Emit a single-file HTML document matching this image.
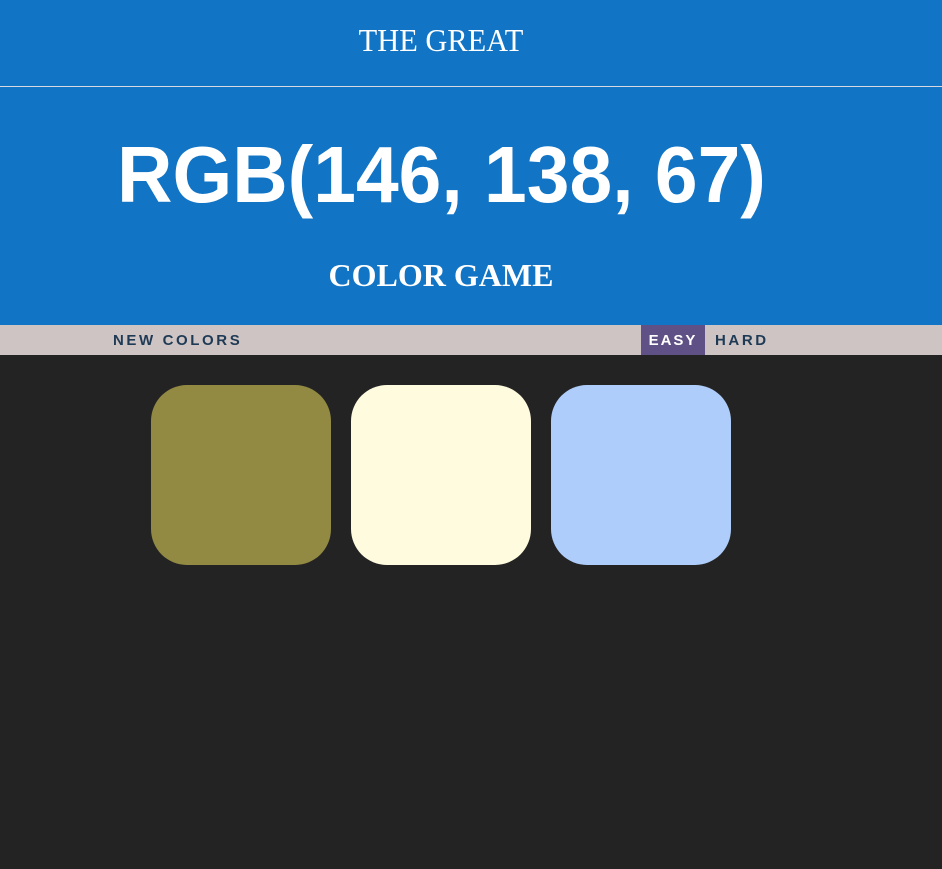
<!DOCTYPE html>
<html><head><style>
html,body{margin:0;padding:0;background:#232323;width:942px;height:869px;overflow:hidden}
#hd{position:absolute;left:0;top:0;width:942px;height:325px;background:#1174c5;color:#fff}
.t1{position:absolute;top:22px;left:0;width:882px;text-align:center;font:32px "Liberation Serif",serif;transform:scaleX(0.95)}
.line{position:absolute;top:86px;left:0;width:942px;height:1px;background:#d8d8e0}
.rgb{position:absolute;top:130px;left:117px;font:bold 80px/90px "Liberation Sans",sans-serif;white-space:nowrap;transform-origin:0 0;transform:scaleX(0.96)}
.t2{position:absolute;top:257px;left:0;width:882px;text-align:center;font:bold 32px "Liberation Serif",serif}
#bar{position:absolute;top:325px;left:0;width:942px;height:30px;background:#cfc4c4;font:bold 15px/30px "Liberation Sans",sans-serif;letter-spacing:2.6px;color:#1e3a55}
#bar span{position:absolute;top:1px;height:30px}
.sq{position:absolute;top:385px;width:180px;height:180px;border-radius:36px}
</style></head><body>
<div id="hd">
<div class="t1">THE GREAT</div>
<div class="line"></div>
<div class="rgb">RGB(146, 138, 67)</div>
<div class="t2">COLOR GAME</div>
</div>
<div id="bar">
<span style="left:113px">NEW COLORS</span>
<span style="left:641px;top:0;line-height:31px;width:64px;background:#5f5185;color:#fff;text-align:center;letter-spacing:2px">EASY</span>
<span style="left:715px">HARD</span>
</div>
<div class="sq" style="left:151px;background:#928a43"></div>
<div class="sq" style="left:351px;background:#fffbdf"></div>
<div class="sq" style="left:551px;background:#afcdfb"></div>
</body></html>
